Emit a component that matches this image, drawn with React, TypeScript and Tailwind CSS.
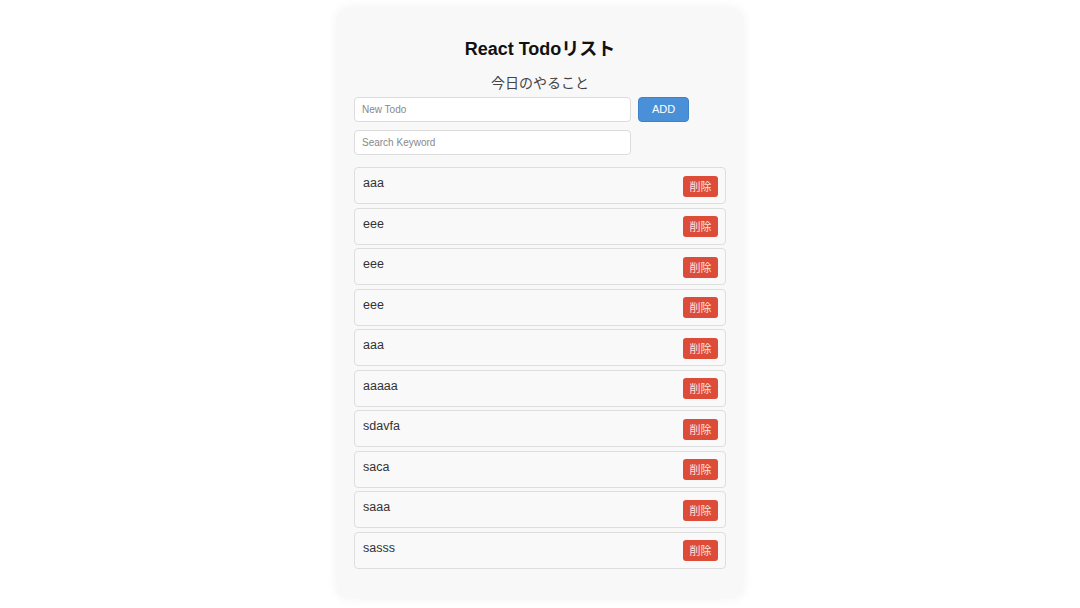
import React from "react";

const todos = ["aaa", "eee", "eee", "eee", "aaa", "aaaaa", "sdavfa", "saca", "saaa", "sasss"];

const font = { fontFamily: '"Liberation Sans", Arial, "Noto Sans CJK JP", sans-serif' };

export default function App() {
  return (
    <div className="min-h-screen bg-white flex justify-center pt-2" style={font}>
      <div className="w-[406px] h-[590px] bg-[#f8f8f8] rounded-xl shadow-[0_0_12px_rgba(0,0,0,0.06)] px-[17px] pt-[28px]">
        <h1 className="text-[18px] leading-[26px] font-bold text-center text-[#111]">React Todoリスト</h1>
        <p className="mt-[11px] text-[14px] leading-[20px] text-center text-[#444]">今日のやること</p>
        <div className="mt-[4px] flex items-center">
          <input
            className="w-[277px] h-[25px] bg-white border border-[#dcdcdc] rounded-[4px] px-[7px] text-[10px] outline-none placeholder:text-[#888]"
            placeholder="New Todo"
          />
          <button className="ml-[7px] w-[51px] h-[25px] bg-[#4a90d9] rounded-[4px] text-white text-[11px] border border-[#3f82c9]">ADD</button>
        </div>
        <div className="mt-[7px]">
          <input
            className="w-[277px] h-[25px] bg-white border border-[#dcdcdc] rounded-[4px] px-[7px] text-[10px] outline-none placeholder:text-[#888]"
            placeholder="Search Keyword"
          />
        </div>
        <ul className="mt-[12px] flex flex-col gap-[3.5px]">
          {todos.map((t, i) => (
            <li
              key={i}
              className="h-[37px] flex items-center justify-between bg-[#f9f9f9] border border-[#dedede] rounded-[4px] pl-[8px] pr-[7px]"
            >
              <span className="text-[12.5px] text-[#333] -mt-[4px]">{t}</span>
              <button className="w-[35px] h-[21px] bg-[#dd4b39] rounded-[3px] text-[#fbe4df] text-[11px] leading-none mt-[1px]" style={{ fontFamily: '"Noto Sans CJK JP", sans-serif' }}>
                削除
              </button>
            </li>
          ))}
        </ul>
      </div>
    </div>
  );
}
